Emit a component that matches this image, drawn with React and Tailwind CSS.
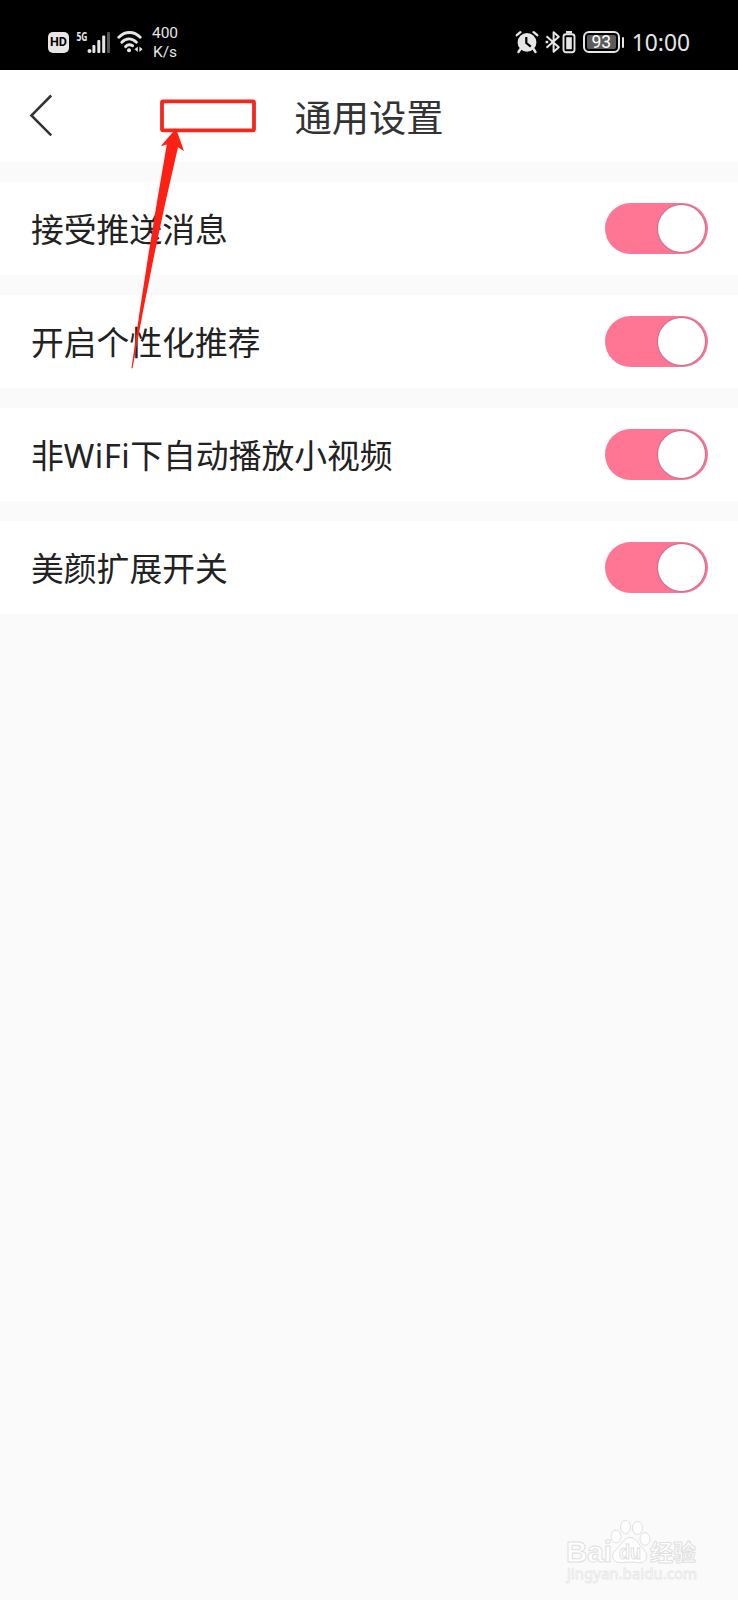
import React, { useState } from 'react';

const SETTINGS = [
  { id: 'push', label: '接受推送消息' },
  { id: 'recommend', label: '开启个性化推荐' },
  { id: 'autoplay', label: <>非<span className="tracking-[0.5px]">WiFi</span>下自动播放小视频</> },
  { id: 'beauty', label: '美颜扩展开关' },
];

function SignalIcon() {
  return (
    <svg width="34" height="24" viewBox="0 0 34 24" className="ml-[7px] overflow-visible">
      <text x="0.5" y="11" fontSize="13" fontWeight="700" fill="#e6e6e6" textLength="11" lengthAdjust="spacingAndGlyphs">5G</text>
      <g fill="#e6e6e6">
        <circle cx="13.5" cy="21" r="2" />
        <rect x="16.4" y="15" width="3" height="8" rx="1" />
        <rect x="21.3" y="10" width="3" height="13" rx="1" />
        <rect x="26.2" y="5.5" width="3" height="17.5" rx="1" />
      </g>
      <rect x="31" y="2" width="3" height="21" rx="1" fill="#555" />
    </svg>
  );
}

function WifiIcon() {
  return (
    <svg width="26" height="24" viewBox="0 0 26 24" className="ml-[7px] mr-[-1px]" fill="none" stroke="#e6e6e6" strokeWidth="2.9" strokeLinecap="round">
      <path d="M1.8 7.3C8 .9 17 .9 23.2 7.3" />
      <path d="M4.8 12.2c4.4-4.4 10-4.4 14.6 0" />
      <path d="M8.6 16.6c2-2 4.6-2.2 7-.8" />
      <circle cx="12" cy="20.2" r="2" fill="#e6e6e6" stroke="none" />
      <path d="M20.8 16.6v5.4l-3.2-2.7zM22.4 16.6v5.4l3.2-2.7z" fill="#e6e6e6" stroke="none" />
    </svg>
  );
}

function AlarmIcon() {
  return (
    <svg width="24" height="24" viewBox="0 0 24 24">
      <path d="M1.8 5.2 5.4 2.2M22.2 5.2 18.6 2.2M5.5 19 3.5 22M18.5 19l2 3" stroke="#e6e6e6" strokeWidth="2.4" strokeLinecap="round" />
      <circle cx="12" cy="12.4" r="9.4" fill="#e6e6e6" />
      <path d="M11.3 7v6l4.5 3.6" fill="none" stroke="#000" strokeWidth="2.2" />
    </svg>
  );
}

function BluetoothIcon() {
  return (
    <svg width="16" height="24" viewBox="0 0 16 24" className="ml-[6px]" fill="none" stroke="#e6e6e6" strokeWidth="2">
      <path d="M1.5 6.2 13.8 17.2 8.6 21.8V2.2l5.2 4.6L1.5 17.8" strokeLinejoin="round" />
      <path d="M.6 12h2.6" strokeWidth="2.4" />
    </svg>
  );
}

function StatusBar() {
  return (
    <div className="h-[70px] pl-[48px] pr-[48px] pt-[14px] flex items-center justify-between bg-black text-[#e6e6e6]">
      <div className="flex items-center">
        <div className="w-[21px] h-[21px] rounded-[5px] bg-[#e6e6e6] flex items-center justify-center">
          <span className="text-[12.5px] leading-none font-bold text-black font-['Roboto']">HD</span>
        </div>
        <SignalIcon />
        <WifiIcon />
        <div className="ml-[9px] w-[28px] pt-px text-center text-[15.5px] leading-[18.5px] font-['Roboto']">
          <p>400</p>
          <p>K/s</p>
        </div>
      </div>
      <div className="flex items-center">
        <AlarmIcon />
        <BluetoothIcon />
        <svg width="14" height="24" viewBox="0 0 14 24" className="ml-px">
          <rect x="4" y="1" width="6" height="2.5" fill="#e6e6e6" />
          <rect x="1.5" y="4.2" width="11" height="18" rx="2.5" fill="none" stroke="#e6e6e6" strokeWidth="1.9" />
          <rect x="4.2" y="7.2" width="5.6" height="12" fill="#e6e6e6" />
        </svg>
        <div className="ml-[7px] w-[37px] h-[22px] border-2 border-[#e6e6e6] rounded-[6px] p-[2px]">
          <div className="h-full bg-[#5c5c5c] rounded-[2px] flex items-center justify-center">
            <span className="pt-px text-[17.5px] leading-none text-white font-['Roboto']">93</span>
          </div>
        </div>
        <div className="ml-[2px] w-[2px] h-[11px] rounded-sm bg-[#e6e6e6]" />
        <span className="ml-[8px] pt-px text-[22.8px] leading-[24px]">10:00</span>
      </div>
    </div>
  );
}

function Header() {
  return (
    <header className="relative h-[92px] bg-white flex items-center justify-center">
      <button className="absolute left-[27px] top-[22px]" aria-label="返回">
        <svg width="28" height="46" viewBox="0 0 28 46" fill="none" stroke="#333" strokeWidth="2.5">
          <path d="M24.2 3.5 4.4 23.5 24.2 43.4" />
        </svg>
      </button>
      <h1 className="pt-[4px] text-[37.3px] leading-[48px] text-[#333]">通用设置</h1>
    </header>
  );
}

function Toggle({ on, onChange }) {
  return (
    <button
      role="switch"
      aria-checked={on}
      onClick={onChange}
      className={`w-[103px] h-[51px] rounded-full pl-[2px] pr-[3px] flex items-center ${on ? 'bg-[#ff7594] justify-end' : 'bg-gray-300 justify-start'}`}
    >
      <span className="w-[47px] h-[47px] rounded-full bg-white shadow-[0_0_1px_1px_rgba(150,110,140,0.55)]" />
    </button>
  );
}

// Red frame and pointer drawn over the page
function Annotation() {
  return (
    <svg className="absolute left-0 top-0 pointer-events-none" width="300" height="380" viewBox="0 0 300 380">
      <rect x="162" y="101.3" width="92" height="29" rx="1" fill="none" stroke="#f5261b" strokeWidth="3.8" />
      <path d="M176 128.5 160.7 146.3 166.8 144.5Q147 257 131.4 368.5L132.6 368Q152 258 178 147.2L184 151Z" fill="#ff2015" />
    </svg>
  );
}

function Watermark() {
  return (
    <svg className="absolute right-[34px] bottom-[16px] pointer-events-none" width="140" height="70" viewBox="0 0 140 70" fill="#fff" stroke="#e0e0e0" strokeWidth="1">
      <g fontWeight="700">
        <text x="2" y="47.5" fontSize="30" textLength="46" lengthAdjust="spacingAndGlyphs" className="font-['Liberation_Sans']">Bai</text>
        <ellipse cx="52" cy="22.5" rx="5" ry="6.3" />
        <ellipse cx="61.5" cy="13" rx="5" ry="6.5" />
        <ellipse cx="73.5" cy="14" rx="5" ry="6.5" />
        <ellipse cx="81" cy="25" rx="5" ry="6.3" />
        <path d="M66 23.5c5 0 8 5 11 9 4 5 7 7 5.5 11.5-1.5 5-6 5-10 4.5-5-.6-8-.6-13 0-4 .5-9 0-10.5-4.5-1.5-4.5 2-7 6-11.5 3-4 6-9 11-9z" />
        <text x="55" y="44.5" fontSize="20" textLength="22" lengthAdjust="spacingAndGlyphs" className="font-['Liberation_Sans']">du</text>
        <text x="86" y="46.5" fontSize="23" textLength="46" lengthAdjust="spacingAndGlyphs">经验</text>
      </g>
      <text x="3" y="65" fontSize="14.5" stroke="#e8e8e8" strokeWidth="0.8" textLength="130" lengthAdjust="spacingAndGlyphs">jingyan.baidu.com</text>
    </svg>
  );
}

export default function App() {
  const [enabled, setEnabled] = useState({ push: true, recommend: true, autoplay: true, beauty: true });

  const toggle = (id) => setEnabled((prev) => ({ ...prev, [id]: !prev[id] }));

  return (
    <div className="relative w-[738px] h-[1600px] overflow-hidden bg-[#fafafa] font-['Noto_Sans','Noto_Sans_CJK_SC',sans-serif]">
      <StatusBar />
      <Header />
      <main className="pt-[20px] flex flex-col gap-[20px]">
        {SETTINGS.map((s) => (
          <div key={s.id} className="h-[93px] pl-[31px] pr-[30px] bg-white flex items-center justify-between">
            <span className="pt-[3px] text-[32.8px] leading-[44px] text-[#222]">{s.label}</span>
            <Toggle on={enabled[s.id]} onChange={() => toggle(s.id)} />
          </div>
        ))}
      </main>
      <Annotation />
      <Watermark />
    </div>
  );
}
